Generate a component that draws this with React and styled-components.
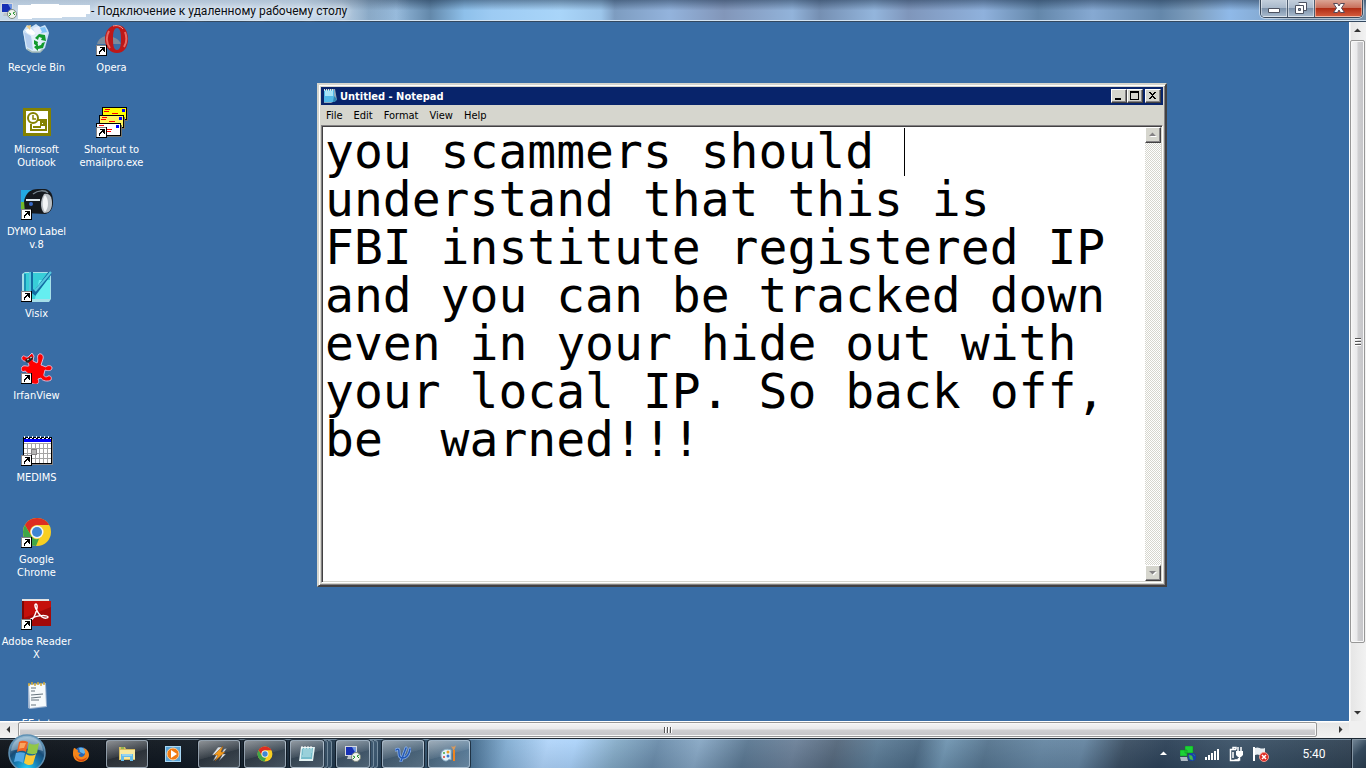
import styled, { createGlobalStyle, css } from "styled-components";

const GlobalStyle = createGlobalStyle`
   * {
      box-sizing: border-box;
   }
   body {
      margin: 0;
      overflow: hidden;
   }
   button {
      border: 0;
      padding: 0;
      margin: 0;
      background: none;
      color: inherit;
      font: inherit;
   }
   svg {
      display: block;
      flex-shrink: 0;
   }
`;

const classicFont = css`
   font-family: "DejaVu Sans Condensed", "DejaVu Sans", sans-serif;
   font-size: 11px;
   line-height: 13px;
`;

const Screen = styled.div`
   height: 100vh;
   display: flex;
   flex-direction: column;
`;

const TitleBar = styled.header`
   height: 22px;
   flex-shrink: 0;
   display: flex;
   align-items: center;
   justify-content: space-between;
   padding: 0 3px 0 1px;
   border-bottom: 1px solid #33485f;
   box-shadow: inset 0 -1px 0 #d4e4f2;
   background:
      linear-gradient(to right, rgb(200 217 234 / 0.75) 22%, rgb(200 217 234 / 0) 30%),
      linear-gradient(to bottom, rgb(15 35 60 / 0.45), rgb(255 255 255 / 0) 50%),
      linear-gradient(to right, #b9cde0 0, #c2d6e9 18%, #a9c2da 25%, #7297b9 27%, #92b7da 29%,
         #6388aa 31.5%, #8ec0ea 34%, #9dcbf3 36%, #a9d5f9 41%, #9cc5ea 44%, #7d9cc0 45%, #93b3dc 49%,
         #8296b9 53%, #92b3da 58%, #758fb2 60%, #93b5dc 64%, #7f96bb 66.5%, #8fb1dc 72%, #6487aa 76%,
         #86a9d2 80%, #6487aa 85%, #7f9fbf 87.5%, #8fb9e8 90%, #83a8cf 93%, #56728f 95%, #7893ad);
`;

const TitleLeft = styled.div`
   display: flex;
   align-items: center;
   gap: 1px;
   h1 {
      margin: 0;
      font-family: Roboto, "Noto Sans", sans-serif;
      font-size: 12px;
      line-height: 20px;
      font-weight: 400;
      color: #0b0f14;
      white-space: nowrap;
      text-shadow: 0 0 6px #fff, 0 0 8px rgb(255 255 255 / 0.7);
   }
`;

const AeroButtons = styled.div`
   align-self: flex-start;
   display: flex;
   height: 18px;
   border: 1px solid #39485a;
   border-top: 0;
   border-radius: 0 0 5px 5px;
   overflow: hidden;
   box-shadow: 0 0 0 1px rgb(255 255 255 / 0.5);
`;

const AeroButton = styled.button`
   width: ${(p) => (p.$close ? 47 : 26)}px;
   display: flex;
   align-items: center;
   justify-content: center;
   border: 1px solid ${(p) => (p.$close ? "rgb(255 200 180 / 0.6)" : "rgb(255 255 255 / 0.45)")};
   border-top: 0;
   background: ${(p) =>
      p.$close
         ? "linear-gradient(#dba494, #c9705c 48%, #b02c14 52%, #d2593a)"
         : "linear-gradient(#c3cfdc, #a9b9cb 48%, #7d92aa 52%, #a6b8cb)"};
   & + & {
      box-shadow: -1px 0 0 #4d5d70;
      margin-left: 1px;
   }
`;

const Session = styled.main`
   flex: 1;
   min-height: 0;
   display: grid;
   grid-template-columns: minmax(0, 1fr) 17px;
   grid-template-rows: minmax(0, 1fr) 17px;
   background: #f0f0f0;
`;

const Desktop = styled.div`
   position: relative;
   overflow: hidden;
   background: #396da5;
`;

const IconGrid = styled.div`
   display: grid;
   grid-auto-flow: column;
   grid-template-rows: repeat(9, 82px);
   grid-auto-columns: 75px;
   padding-top: 2px;
   margin-left: -1px;
`;

const DesktopIcon = styled.button`
   ${classicFont}
   display: flex;
   flex-direction: column;
   align-items: center;
   gap: 5px;
   color: #fff;
   span {
      white-space: pre;
   }
`;

const NotepadWindow = styled.section`
   ${classicFont}
   position: absolute;
   left: 317px;
   top: 61px;
   width: 850px;
   height: 504px;
   display: flex;
   flex-direction: column;
   padding: 2px;
   background: #d6d6ce;
   border: 2px solid;
   border-color: #d6d6ce #424142 #424142 #d6d6ce;
   box-shadow: inset 1px 1px 0 #fff, inset -1px -1px 0 #848284;
`;

const NotepadTitle = styled.div`
   height: 18px;
   flex-shrink: 0;
   display: flex;
   align-items: center;
   gap: 2px;
   padding: 0 2px 0 1px;
   background: #08246b;
   color: #fff;
   h2 {
      flex: 1;
      margin: 0;
      font-size: 11px;
      line-height: 13px;
      font-weight: 700;
   }
`;

const ClassicButton = styled.button`
   width: 16px;
   height: ${(p) => p.$height || 14}px;
   flex-shrink: 0;
   display: flex;
   align-items: center;
   justify-content: center;
   background: #d6d6ce;
   border: 1px solid;
   border-color: #fff #424142 #424142 #fff;
   box-shadow: inset -1px -1px 0 #848284;
`;

const CaptionButtons = styled.div`
   display: flex;
   button:last-child {
      margin-left: 2px;
   }
`;

const MenuBar = styled.nav`
   height: 20px;
   flex-shrink: 0;
   display: flex;
   align-items: center;
   gap: 11px;
   padding: 0 5px;
`;

const Client = styled.div`
   flex: 1;
   min-height: 0;
   display: flex;
   position: relative;
   background: #fff;
   border: 1px solid;
   border-color: #848284 #fff #fff #848284;
   box-shadow: inset 1px 1px 0 #424142, inset -1px -1px 0 #d6d6ce;
   padding: 1px;
`;

const NoteText = styled.textarea`
   flex: 1;
   min-width: 0;
   border: 0;
   outline: 0;
   padding: 0 2px;
   margin: 0;
   resize: none;
   overflow: hidden;
   background: transparent;
   color: #000;
   font-family: "DejaVu Sans Mono", monospace;
   font-size: 48px;
   line-height: 48px;
   white-space: pre;
`;

const Caret = styled.i`
   position: absolute;
   left: 582px;
   top: 2px;
   width: 1px;
   height: 48px;
   background: #000;
`;

const ClassicScroll = styled.div`
   width: 16px;
   display: flex;
   flex-direction: column;
   justify-content: space-between;
   background: repeating-conic-gradient(#fff 0 25%, #d6d6ce 0 50%) 0 0 / 2px 2px;
`;

const ScrollBar = styled.div`
   display: flex;
   flex-direction: ${(p) => (p.$vertical ? "column" : "row")};
   background: linear-gradient(${(p) => (p.$vertical ? "to right" : "to bottom")}, #fff 1px, #e6e6e6 2px, #f2f2f2);
`;

const ScrollArrow = styled.button`
   width: 17px;
   height: 17px;
   flex-shrink: 0;
   display: flex;
   align-items: center;
   justify-content: center;
`;

const ScrollThumb = styled.div`
   flex: ${(p) => p.$size} 1 0;
   margin: ${(p) => (p.$vertical ? "1px 1px 0" : "1px 0 1px 1px")};
   display: flex;
   align-items: center;
   justify-content: center;
   border: 1px solid #979797;
   border-radius: 2px;
   box-shadow: inset 0 0 0 1px #f8f8f8;
   background: linear-gradient(
      ${(p) => (p.$vertical ? "to right" : "to bottom")},
      #f4f4f4,
      #e8e8ea 48%,
      #cfcfd1 52%,
      #c4c4c8
   );
`;

const ScrollRest = styled.div`
   flex: ${(p) => p.$size} 1 0;
`;

const TaskBar = styled.footer`
   height: 30px;
   flex-shrink: 0;
   display: flex;
   align-items: center;
   border-top: 1px solid #1b2733;
   box-shadow: inset 0 1px 0 rgb(190 215 235 / 0.45);
   background:
      linear-gradient(to bottom, rgb(255 255 255 / 0.05), rgb(0 10 25 / 0.1)),
      linear-gradient(105deg, #0d1218 0, #0f161e 12%, #14202b 18%, #22394e 25%, #315069 31%, #456d8f 34.5%,
         #83aed3 37%, #b2d6fb 40%, #add4fb 42%, #86acc8 45%, #6b8dab 48%, #88a8c5 51%, #5b7892 54.5%,
         #6c8199 58%, #55687c 61%, #5d7d97 64%, #4c6a84 67%, #7095b1 69%, #56758f 72%, #6687a3 76%,
         #6585a1 79%, #3b4f63 82%, #2d4258 85%, #3c5368 90%, #34495c 95%, #2f3f4f);
`;

const StartButton = styled.button`
   position: relative;
   width: 60px;
   height: 29px;
   svg {
      position: absolute;
      left: 8px;
      bottom: -4px;
   }
`;

const TaskButtons = styled.div`
   flex: 1;
   display: flex;
   gap: 4px;
`;

const taskFrame = css`
   border: 1px solid rgb(205 222 236 / 0.6);
   border-radius: 3px;
   box-shadow: 0 0 0 1px rgb(5 12 20 / 0.6);
   background: linear-gradient(165deg, rgb(255 255 255 / 0.5), rgb(255 255 255 / 0.16) 50%, rgb(255 255 255 / 0.1) 52%, rgb(255 255 255 / 0.2));
`;

const TaskSlot = styled.div`
   width: 42px;
   height: 28px;
   display: flex;
`;

const TaskButton = styled.button`
   flex: 1;
   display: flex;
   align-items: center;
   justify-content: center;
   ${(p) => p.$open && taskFrame}
`;

const StackEdge = styled.span`
   width: 4px;
   border: 1px solid rgb(205 222 236 / 0.4);
   border-left: 0;
   border-radius: 0 3px 3px 0;
   background: rgb(90 120 145 / 0.35);
`;

const Tray = styled.div`
   display: flex;
   align-items: center;
   height: 29px;
   gap: 9px;
   time {
      width: 72px;
      text-align: center;
      font-family: Roboto, "Noto Sans", sans-serif;
      font-size: 12px;
      line-height: 16px;
      color: #fff;
   }
`;

const TrayToggle = styled.button`
   width: 15px;
   height: 16px;
   display: flex;
   align-items: center;
   justify-content: center;
`;

const ShowDesktop = styled.button`
   width: 14px;
   height: 29px;
   margin-left: -7px;
   border: 1px solid #8495a3;
   border-width: 1px 0 0 1px;
   box-shadow: -1px 0 0 #172330;
   background: linear-gradient(135deg, #718494, #34495c 45%, #263747);
`;

const ShortcutArrow = () => (
   <g shapeRendering="crispEdges">
      <path d="M0 21h11v11H0z" fill="#000" />
      <path d="M0 21h10v10H0z" fill="#848284" />
      <path d="M1 22h9v9H1z" fill="#fff" />
      <path d="M4 23h5v5H8v-1H7v-1H6v1H5v1H4v2H3v-3h1v-1h1v-1h1v-1H4z" fill="#000" />
   </g>
);

const IconBox = ({ shortcut, children }) => (
   <svg width="32" height="32" viewBox="0 0 32 32">
      {children}
      {shortcut && <ShortcutArrow />}
   </svg>
);

const RecycleIcon = () => (
   <IconBox>
      <path d="M2 7 6 1l4 2 5-3 4 3 5-2 3 5 1 3-4 15-5 4H10l-5-3z" fill="#c9e2f7" />
      <path d="m4 6 5-2 6 5-5 6z" fill="#fff" />
      <path d="m5 2 5-1-1 5z" fill="#efce86" />
      <path d="m18 4 6-1 2 5-6 1z" fill="#7fc2f6" />
      <path d="m12 4 6-2 3 6-6 4z" fill="#e8eefb" />
      <path d="m2 7 9 4 15-2-4 15-5 4-7-1-5-3z" fill="#dcecf8" opacity=".8" />
      <path d="m3 8 7 4 2 14-6-3z" fill="#b4cdee" />
      <path d="m11 12 14-3-3 14-4 4-6-1z" fill="#e8f3fa" opacity=".7" />
      <path d="m14 14 4-4 6 1 1 6-5-1 1-2-3-1-1 3zM24 18l-2 6-5 1v2l-4-4 4-3v2l3-1 1-2zM13 16l4 2-1 4-3-2z" fill="#129a2c" />
      <path d="m6 25 5 3h8l3-3" fill="none" stroke="#a8bdba" strokeWidth="1.5" />
   </IconBox>
);

const OperaIcon = () => (
   <IconBox shortcut>
      <path d="M1 20c1-5 7-9 12-8s10 3 12 8z" fill="#7b8b9b" />
      <path fillRule="evenodd" d="M21 1c7 0 11 6 11 14s-4 14-11 14-12-6-12-14S14 1 21 1zm0 3c-3 0-4 4-4 11s1 11 4 11 4-4 4-11-1-11-4-11z" fill="#bd1818" />
      <path d="M13 7c-3 5-3 12 1 17M29 8c2 5 2 10-1 15" fill="none" stroke="#e96a62" strokeWidth="2" />
      <path d="M17 2c4-1 8 0 10 3" fill="none" stroke="#f6a098" strokeWidth="1" />
   </IconBox>
);

const OutlookIcon = () => (
   <IconBox>
      <g fill="none" stroke="#848200">
         <path d="M3.500 3.500h25v25h-25z" fill="#fff" strokeWidth="3" />
         <circle cx="12" cy="12" r="5" strokeWidth="2" />
         <path d="M12 9v4h3" strokeWidth="1.500" />
         <path d="M17 14h8v10H10v-6" strokeWidth="2" />
         <path d="M12 21h8M20 16h3v3h-3z" strokeWidth="2" />
      </g>
   </IconBox>
);

const Envelope = ({ x, y, fill }) => (
   <g transform={`translate(${x} ${y})`}>
      <path d="M2 2h24v12H2z" fill="#73736b" />
      <path d="M0 0h25v13H0z" fill="#000" />
      <path d="M1 1h23v11H1z" fill={fill} />
      <path d="M20 2h3v3h-3z" fill="#00f" />
      <path d="M3 2h5v1H3zM2 4h5v1H2zM10 6h6v1h-6zM9 8h6v1H9z" fill="#f00" />
   </g>
);

const MailIcon = () => (
   <IconBox shortcut>
      <g shapeRendering="crispEdges">
         <Envelope x={6} y={1} fill="#ff0" />
         <Envelope x={3} y={9} fill="#fff45a" />
         <Envelope x={0} y={17} fill="#fff" />
      </g>
   </IconBox>
);

const DymoIcon = () => (
   <IconBox shortcut>
      <path d="M0 2h13v12H0z" fill="#22a9e1" />
      <path d="M0 14h4v8H0z" fill="#72b82b" />
      <path d="M3 13C5 5 9 1 17 1h7c6 1 8 6 8 13 0 7-3 11-8 12L4 25z" fill="#15191e" />
      <path d="M12 6c5-4 12-4 15-1" fill="none" stroke="#75838c" strokeWidth="1.500" />
      <path d="M23 6c5-1 8 2 8 9s-3 10-8 10c-4-4-4-13 0-19z" fill="#b9bfc4" />
      <path d="M24 7c4 4 4 13 0 17-3-4-3-13 0-17z" fill="#f3f5f6" />
      <path d="M5 12h14" stroke="#dfe9ee" strokeWidth="2" />
      <circle cx="10" cy="16" r="2" fill="#3768c5" />
   </IconBox>
);

const VisixIcon = () => (
   <IconBox shortcut>
      <path d="m1 4 3-2h26v27l-2 3H1z" fill="#a5dfe8" />
      <path d="M3 3h26v26H3z" fill="#38ced8" />
      <path d="M18 10h11v19H14z" fill="#65eef0" />
      <path d="M10 2v18l4 3L29 3" fill="none" stroke="#126ca2" strokeWidth="4" />
      <path d="M9 2v19M14 21 30 2" fill="none" stroke="#54c7df" strokeWidth="2" />
      <path d="M4 4v17" stroke="#1a91b6" strokeWidth="2" />
   </IconBox>
);

const IrfanIcon = () => (
   <IconBox shortcut>
      <path
         d="M1 5c2-3 3 1 6 0l4-4 2 3-1 5 4 2c2-2-1-7 2-9 3-1 5 2 4 5l-2 6 5 2c1-2 6-2 6 1s-4 3-7 2l-1 4c-1 2 2 4 4 2 3-1 4 2 3 4-3 2-9 1-10-2l-3 1c2 4-1 6-4 5-3 0-3-3-3-7-4-1-3-5-6-6-3 2-5-2-3-4 2-3 7 1 7-2L6 9C2 10 0 7 1 5z"
         fill="#f00"
         stroke="#dbb9d6"
      />
      <path d="m4 8 7-4 1 3-5 4-2-1z" fill="#272322" />
      <path d="m6 8 2-1M9 6l2-1" stroke="#ddd" />
   </IconBox>
);

const MedimsIcon = () => (
   <IconBox shortcut>
      <g shapeRendering="crispEdges">
         <path d="M4 5h28v26H4z" fill="#848284" />
         <path d="M2 3h29v27H2z" fill="#000" />
         <path d="M3 4h27v25H3z" fill="#fff" />
         <path d="M3 5h27v3H3z" fill="#00f" />
         <path d="M3 3h27" stroke="#fff" strokeWidth="2" strokeDasharray="1 3" />
         <path d="M3 4h27" stroke="#000" strokeDasharray="2 2" />
         <path d="M3 9.500h27M3 14.500h27M3 19.500h27M3 24.500h27M6.500 9v20M10.500 9v20M14.500 9v20M18.500 9v20M22.500 9v20M26.500 9v20" stroke="#a5a5a5" />
         <path d="M10 15h5v5h-5z" fill="#b5b5b5" stroke="#848284" />
      </g>
   </IconBox>
);

const ChromeMark = () => (
   <>
      <circle cx="16" cy="16" r="14" fill="#f8cf22" />
      <path d="M3.900 9A14 14 0 0 1 28.200 9H16a7 7 0 0 0-6 10.500z" fill="#dd2c22" />
      <path d="M3.900 9 10 19.500a7 7 0 0 0 8 3.300L15 30A14 14 0 0 1 3.900 9z" fill="#3fa648" />
      <circle cx="16" cy="16" r="6.500" fill="#f3f5f7" />
      <circle cx="16" cy="16" r="5" fill="#3f86d2" />
   </>
);

const ChromeIcon = () => (
   <IconBox shortcut>
      <ChromeMark />
   </IconBox>
);

const AdobeIcon = () => (
   <IconBox shortcut>
      <path d="M1 1h27v3H1z" fill="#e4e4e4" />
      <path d="M1 3h29v25H1z" fill="#c5100c" />
      <path d="M1 3h2v25H1z" fill="#7d0806" />
      <path d="M3 20 30 9v19H3z" fill="#a30908" />
      <path d="M15 6c-3 0 1 9 6 13 3 2 6 1 6 0 0-2-11-2-15 1-4 2-4 3-2 2C14 20 18 7 15 6z" fill="none" stroke="#fff" strokeWidth="1.500" />
   </IconBox>
);

const TextFileIcon = () => (
   <IconBox>
      <path d="m7 4 18-1 1 24-17 2-2-1z" fill="#9db3cf" />
      <path d="m8 5 16-1 1 22-16 2z" fill="#f6fafc" />
      <path d="M8 3v3M11 2v3M14 3v3M17 2v3M20 3v3M23 2v3" stroke="#d3ab34" strokeWidth="1.500" />
      <path d="M10 8h5M10 11h4M10 15l12-1M10 18l10-1M10 20h8M10 25h5" stroke="#65737c" />
   </IconBox>
);

const RemoteIcon = () => (
   <svg width="16" height="16" viewBox="0 0 16 16">
      <path d="M0 0h12v10H0z" fill="#d5d8dd" />
      <path d="M1 1h10v8H1z" fill="#1730b5" />
      <path d="M7 1h4v7z" fill="#7198e2" />
      <path d="M3 10h5l1 3H2z" fill="#bfc4ca" />
      <circle cx="11" cy="11" r="4.500" fill="#f2f4ee" stroke="#818b80" />
      <path d="m8 10 2 1-2 2M14 9l-2 1 2 2" fill="none" stroke="#23902c" />
   </svg>
);

const NotepadIcon = () => (
   <svg width="16" height="16" viewBox="0 0 16 16">
      <path d="m3 2 10-1 2 11-6 3H2z" fill="#8fa9ba" />
      <path d="M2 2h10v12H2z" fill="#52b9e8" />
      <path d="M3 3h8v5H3z" fill="#a8e4f7" />
      <path d="m12 8 3 3-2 3h-2z" fill="#3186b4" />
      <path d="M2 2h10" stroke="#dce9e4" strokeWidth="2" strokeDasharray="1 1" />
   </svg>
);

const StartOrb = () => (
   <svg width="38" height="38" viewBox="0 0 38 38">
      <defs>
         <radialGradient id="orb" cx=".5" cy=".95" r=".9">
            <stop offset="0" stopColor="#28d4f8" />
            <stop offset=".35" stopColor="#1680b7" />
            <stop offset=".65" stopColor="#184c77" />
            <stop offset="1" stopColor="#8fb5ce" />
         </radialGradient>
      </defs>
      <circle cx="19" cy="19" r="18" fill="url(#orb)" stroke="#5f91b4" strokeWidth="1.500" />
      <path d="M3 17C4 8 10 3 19 3s15 5 16 14c-9-3-22-3-32 0z" fill="#d7e8f1" opacity=".38" />
      <path d="M11 8c3-2 6-1 9 0l-2 10c-3-2-6-1-9 0z" fill="#ed6426" />
      <path d="M21 9c3 2 6 2 10 0l-2 10c-3 2-7 1-10 0z" fill="#91c748" />
      <path d="M8 19c3-1 6-1 9 0l-2 10c-3-2-6-2-9-1z" fill="#54a8e5" />
      <path d="M18 20c3 2 7 2 10 0l-3 10c-3 2-6 1-9-1z" fill="#fbc936" />
      <path d="M12 9h6l-2 5c-2 0-4 0-5 1z" fill="#f9a45e" />
   </svg>
);

const FirefoxIcon = () => (
   <svg width="16" height="16" viewBox="0 0 16 16">
      <circle cx="8" cy="8" r="7" fill="#2766b4" />
      <path d="M6 2c3-1 5 0 7 3l-2 3-4-2z" fill="#65b5e9" />
      <path d="M1 2c2 0 2 2 4 2-1 2 0 3 3 3-2 1-3 2-2 3 2 2 5 1 6-2 0-2 0-4-2-6 4 1 6 4 6 7 0 4-4 7-8 7s-8-3-8-8c0-2 0-4 1-6z" fill="#f4861b" />
      <path d="M2 9c2 5 8 6 12 2-1 5-10 7-12-2z" fill="#d3440f" />
   </svg>
);

const ExplorerIcon = () => (
   <svg width="18" height="18" viewBox="0 0 18 18">
      <path d="M1 2h6l1 2h9v11H1z" fill="#d8bd60" />
      <path d="M2 5h15v9H2z" fill="#f8e9a0" />
      <path d="M3 3h3" stroke="#49a83e" />
      <path d="M3 16V9h12v7h-3v-4H6v4z" fill="#66bce9" />
      <path d="M4 10h10" stroke="#c5eafb" />
   </svg>
);

const MediaIcon = () => (
   <svg width="16" height="16" viewBox="0 0 16 16">
      <path d="M0 0h16v16H0z" fill="#a9d8f5" />
      <path d="M1 1h14v14H1z" fill="#5aa5d8" />
      <circle cx="8" cy="8" r="6" fill="#f17b12" stroke="#ffd19c" />
      <path d="m6 4 6 4-6 4z" fill="#fff" />
   </svg>
);

const WinampIcon = () => (
   <svg width="16" height="16" viewBox="0 0 16 16">
      <path d="m7 1-6 8h4l-3 6 9-7H8l4-7zM13 3l3-1-4 6h3l-7 7 3-6H9z" fill="#dce2e7" stroke="#454b50" strokeWidth=".5" />
      <path d="m12 0-9 9h4l-3 6L14 6h-4z" fill="#f49a1c" stroke="#8b5215" strokeWidth=".5" />
   </svg>
);

const NotesIcon = () => (
   <svg width="18" height="18" viewBox="0 0 18 18">
      <path d="M3 2h14l-2 14H1z" fill="#e2f2f3" />
      <path d="M4 3h11l-1 11H3z" fill="#75bccb" />
      <path d="M5 5h9M5 7h9M5 9h8M4 11h9" stroke="#bde4e9" />
      <path d="M4 1v3M7 1v3M10 1v3M13 1v3" stroke="#fff" />
   </svg>
);

const TridentIcon = () => (
   <svg width="16" height="16" viewBox="0 0 16 16" fill="none" strokeLinecap="round">
      <path d="M1 4c3-2 3 0 3 3s1 5 4 5c4 0 6-4 7-9M11 2 6 15" stroke="#8db4ee" strokeWidth="3" />
      <path d="M1 4c3-2 3 0 3 3s1 5 4 5c4 0 6-4 7-9M11 2 6 15" stroke="#2458b4" strokeWidth="1.500" />
   </svg>
);

const PaintIcon = () => (
   <svg width="18" height="18" viewBox="0 0 18 18">
      <path d="M1 10c0-5 5-7 10-5v10c-2-2-3 1-5 1s-5-2-5-6z" fill="#e4f2fa" stroke="#87adc5" />
      <circle cx="4" cy="8" r="1" fill="#43a546" />
      <circle cx="8" cy="7" r="1.500" fill="#eda126" />
      <circle cx="4" cy="12" r="1" fill="#da3f36" />
      <circle cx="8" cy="11" r="1.500" fill="#3b78cc" />
      <path d="M11 1c1 1 4 1 5-1-1 3-1 4-2 5h-1c0-2-2-3-2-4z" fill="#d99a5c" />
      <path d="M13 5h2v11h-2z" fill="#ee8420" />
   </svg>
);

const NetworkIcon = () => (
   <svg width="16" height="16" viewBox="0 0 16 16">
      <path d="M5 0h8v7H5zM0 4h7v6H0z" fill="#1bd336" stroke="#138222" strokeWidth=".5" />
      <path d="M0 11h7l1 4H1z" fill="#aebac4" />
      <circle cx="12" cy="11" r="4" fill="#173fae" />
      <path d="m9 9 3 1 1 4-3-1zM13 8l2 2" stroke="#42bc49" fill="#42bc49" strokeWidth=".5" />
   </svg>
);

const SignalIcon = () => (
   <svg width="15" height="12" viewBox="0 0 15 12" shapeRendering="crispEdges">
      <path d="M0 9h2v3H0zM3 7h2v5H3zM6 5h2v7H6zM9 3h2v9H9zM12 1h2v11h-2z" fill="#fff" />
   </svg>
);

const PowerIcon = () => (
   <svg width="15" height="16" viewBox="0 0 15 16" fill="none" stroke="#fff">
      <path d="M7 3.500H1.500v11h8V12M4 3.500v-2h3v2M4 6v6" strokeWidth="1.500" />
      <path d="M7 5h7v4l-2 2H9L7 9z" fill="#fff" stroke="none" />
      <path d="M9 1v4M12 1v4M10.500 10v4h-5" strokeWidth="1.500" />
   </svg>
);

const FlagIcon = () => (
   <svg width="16" height="16" viewBox="0 0 16 16">
      <path d="M1 1v14" stroke="#fff" strokeWidth="2" />
      <path d="M2 2c4-2 5 2 10 0v7c-5 2-6-2-10 0z" fill="#e8edf1" />
      <circle cx="11" cy="11" r="4.500" fill="#de2922" stroke="#f39a91" />
      <path d="m9 9 4 4M13 9l-4 4" stroke="#fff" strokeWidth="1.500" />
   </svg>
);

const arrowPaths = {
   up: "M0 5h7L3.500 1.500z",
   down: "M0 2h7L3.500 5.500z",
   left: "M5 0v7L1.500 3.500z",
   right: "M2 0v7l3.500-3.500z",
};

const Arrow = ({ dir, color = "#333" }) => (
   <svg width="7" height="7" viewBox="0 0 7 7">
      <path d={arrowPaths[dir]} fill={color} />
   </svg>
);

const ClassicArrow = ({ dir }) => (
   <svg width="8" height="8" viewBox="0 0 8 8">
      <path d={arrowPaths[dir]} fill="#fff" transform="translate(1 1)" />
      <path d={arrowPaths[dir]} fill="#848284" />
   </svg>
);

const desktopIcons = [
   { label: "Recycle Bin", Icon: RecycleIcon },
   { label: "Microsoft\nOutlook", Icon: OutlookIcon },
   { label: "DYMO Label\nv.8", Icon: DymoIcon },
   { label: "Visix", Icon: VisixIcon },
   { label: "IrfanView", Icon: IrfanIcon },
   { label: "MEDIMS", Icon: MedimsIcon },
   { label: "Google\nChrome", Icon: ChromeIcon },
   { label: "Adobe Reader\nX", Icon: AdobeIcon },
   { label: "EE.txt", Icon: TextFileIcon },
   { label: "Opera", Icon: OperaIcon },
   { label: "Shortcut to\nemailpro.exe", Icon: MailIcon },
];

const TaskChrome = () => (
   <svg width="16" height="16" viewBox="1 1 30 30">
      <ChromeMark />
   </svg>
);

const tasks = [
   { name: "Firefox", Icon: FirefoxIcon },
   { name: "Explorer", Icon: ExplorerIcon, open: true },
   { name: "Media Player", Icon: MediaIcon },
   { name: "Winamp", Icon: WinampIcon, open: true },
   { name: "Chrome", Icon: TaskChrome, open: true },
   { name: "Notepad", Icon: NotesIcon, open: true, stacked: true },
   { name: "Remote Desktop", Icon: RemoteIcon, open: true, stacked: true },
   { name: "Psi", Icon: TridentIcon, open: true },
   { name: "Paint", Icon: PaintIcon, open: true },
];

const menus = ["File", "Edit", "Format", "View", "Help"];

const note = `you scammers should
understand that this is
FBI institute registered IP
and you can be tracked down
even in your hide out with
your local IP. So back off,
be  warned!!!`;

const Notepad = () => (
   <NotepadWindow>
      <NotepadTitle>
         <NotepadIcon />
         <h2>Untitled - Notepad</h2>
         <CaptionButtons>
            <ClassicButton aria-label="Minimize">
               <svg width="10" height="10" shapeRendering="crispEdges">
                  <path d="M1 7h6v2H1z" />
               </svg>
            </ClassicButton>
            <ClassicButton aria-label="Maximize">
               <svg width="10" height="10" shapeRendering="crispEdges">
                  <path fillRule="evenodd" d="M0 0h9v9H0zM1 2v6h7V2z" />
               </svg>
            </ClassicButton>
            <ClassicButton aria-label="Close">
               <svg width="10" height="10" shapeRendering="crispEdges">
                  <path d="M1 1h2v1h1v1h1V2h1V1h2v1H7v1H6v1H5v1h1v1h1v1h1v1H6V7H5V6H4v1H3v1H1V7h1V6h1V5h1V4H3V3H2V2H1z" />
               </svg>
            </ClassicButton>
         </CaptionButtons>
      </NotepadTitle>
      <MenuBar>
         {menus.map((menu) => (
            <button key={menu}>{menu}</button>
         ))}
      </MenuBar>
      <Client>
         <NoteText aria-label="Text" spellCheck={false} defaultValue={note} />
         <Caret />
         <ClassicScroll>
            <ClassicButton $height={16} aria-label="Scroll up">
               <ClassicArrow dir="up" />
            </ClassicButton>
            <ClassicButton $height={16} aria-label="Scroll down">
               <ClassicArrow dir="down" />
            </ClassicButton>
         </ClassicScroll>
      </Client>
   </NotepadWindow>
);

const App = () => {
   return (
      <Screen>
         <GlobalStyle />
         <TitleBar>
            <TitleLeft>
               <RemoteIcon />
               <svg width="72" height="16" viewBox="0 0 72 16">
                  <path d="M0 2h13V1h28v1h31v9h-4v3H44v1H14v1H0z" fill="#fff" />
               </svg>
               <h1>- Подключение к удаленному рабочему столу</h1>
            </TitleLeft>
            <AeroButtons>
               <AeroButton aria-label="Свернуть">
                  <svg width="12" height="12">
                     <path d="M.5 6.500h11v4H.5z" fill="#fff" stroke="#4d5260" />
                  </svg>
               </AeroButton>
               <AeroButton aria-label="Восстановить">
                  <svg width="12" height="13">
                     <path d="M3.500.5h8v8h-3M.5 3.500h8v8h-8z" fill="#fff" stroke="#4d5260" />
                     <path d="M3.500 6.500h2v2h-2z" fill="#8da0b5" stroke="#4d5260" />
                  </svg>
               </AeroButton>
               <AeroButton $close aria-label="Закрыть">
                  <svg width="12" height="12">
                     <path d="M.5 1.500h4L6 4l1.500-2.500h4L8.500 6l3 4.500h-4L6 8l-1.500 2.500h-4l3-4.500z" fill="#fff" stroke="#574957" />
                  </svg>
               </AeroButton>
            </AeroButtons>
         </TitleBar>
         <Session>
            <Desktop>
               <IconGrid>
                  {desktopIcons.map(({ label, Icon }) => (
                     <DesktopIcon key={label}>
                        <Icon />
                        <span>{label}</span>
                     </DesktopIcon>
                  ))}
               </IconGrid>
               <Notepad />
            </Desktop>
            <ScrollBar $vertical>
               <ScrollArrow aria-label="Вверх">
                  <Arrow dir="up" />
               </ScrollArrow>
               <ScrollThumb $vertical $size={603}>
                  <svg width="8" height="8" shapeRendering="crispEdges">
                     <path d="M1 0h6v1H1zM1 3h6v1H1zM1 6h6v1H1z" fill="#555" />
                     <path d="M1 1h6v1H1zM1 4h6v1H1zM1 7h6v1H1z" fill="#fff" />
                  </svg>
               </ScrollThumb>
               <ScrollRest $size={61} />
               <ScrollArrow aria-label="Вниз">
                  <Arrow dir="down" />
               </ScrollArrow>
            </ScrollBar>
            <ScrollBar>
               <ScrollArrow aria-label="Влево">
                  <Arrow dir="left" />
               </ScrollArrow>
               <ScrollThumb $size={1299}>
                  <svg width="8" height="8" shapeRendering="crispEdges">
                     <path d="M0 1h1v6H0zM3 1h1v6H3zM6 1h1v6H6z" fill="#555" />
                     <path d="M1 1h1v6H1zM4 1h1v6H4zM7 1h1v6H7z" fill="#fff" />
                  </svg>
               </ScrollThumb>
               <ScrollRest $size={15} />
               <ScrollArrow aria-label="Вправо">
                  <Arrow dir="right" />
               </ScrollArrow>
            </ScrollBar>
         </Session>
         <TaskBar>
            <StartButton aria-label="Пуск">
               <StartOrb />
            </StartButton>
            <TaskButtons>
               {tasks.map(({ name, Icon, open, stacked }) => (
                  <TaskSlot key={name}>
                     <TaskButton $open={open} aria-label={name}>
                        <Icon />
                     </TaskButton>
                     {stacked && (
                        <>
                           <StackEdge />
                           <StackEdge />
                        </>
                     )}
                  </TaskSlot>
               ))}
            </TaskButtons>
            <Tray>
               <TrayToggle aria-label="Показать скрытые значки">
                  <Arrow dir="up" color="#fff" />
               </TrayToggle>
               <NetworkIcon />
               <SignalIcon />
               <PowerIcon />
               <FlagIcon />
               <time>5:40</time>
               <ShowDesktop aria-label="Свернуть все окна" />
            </Tray>
         </TaskBar>
      </Screen>
   );
};

export default App;
